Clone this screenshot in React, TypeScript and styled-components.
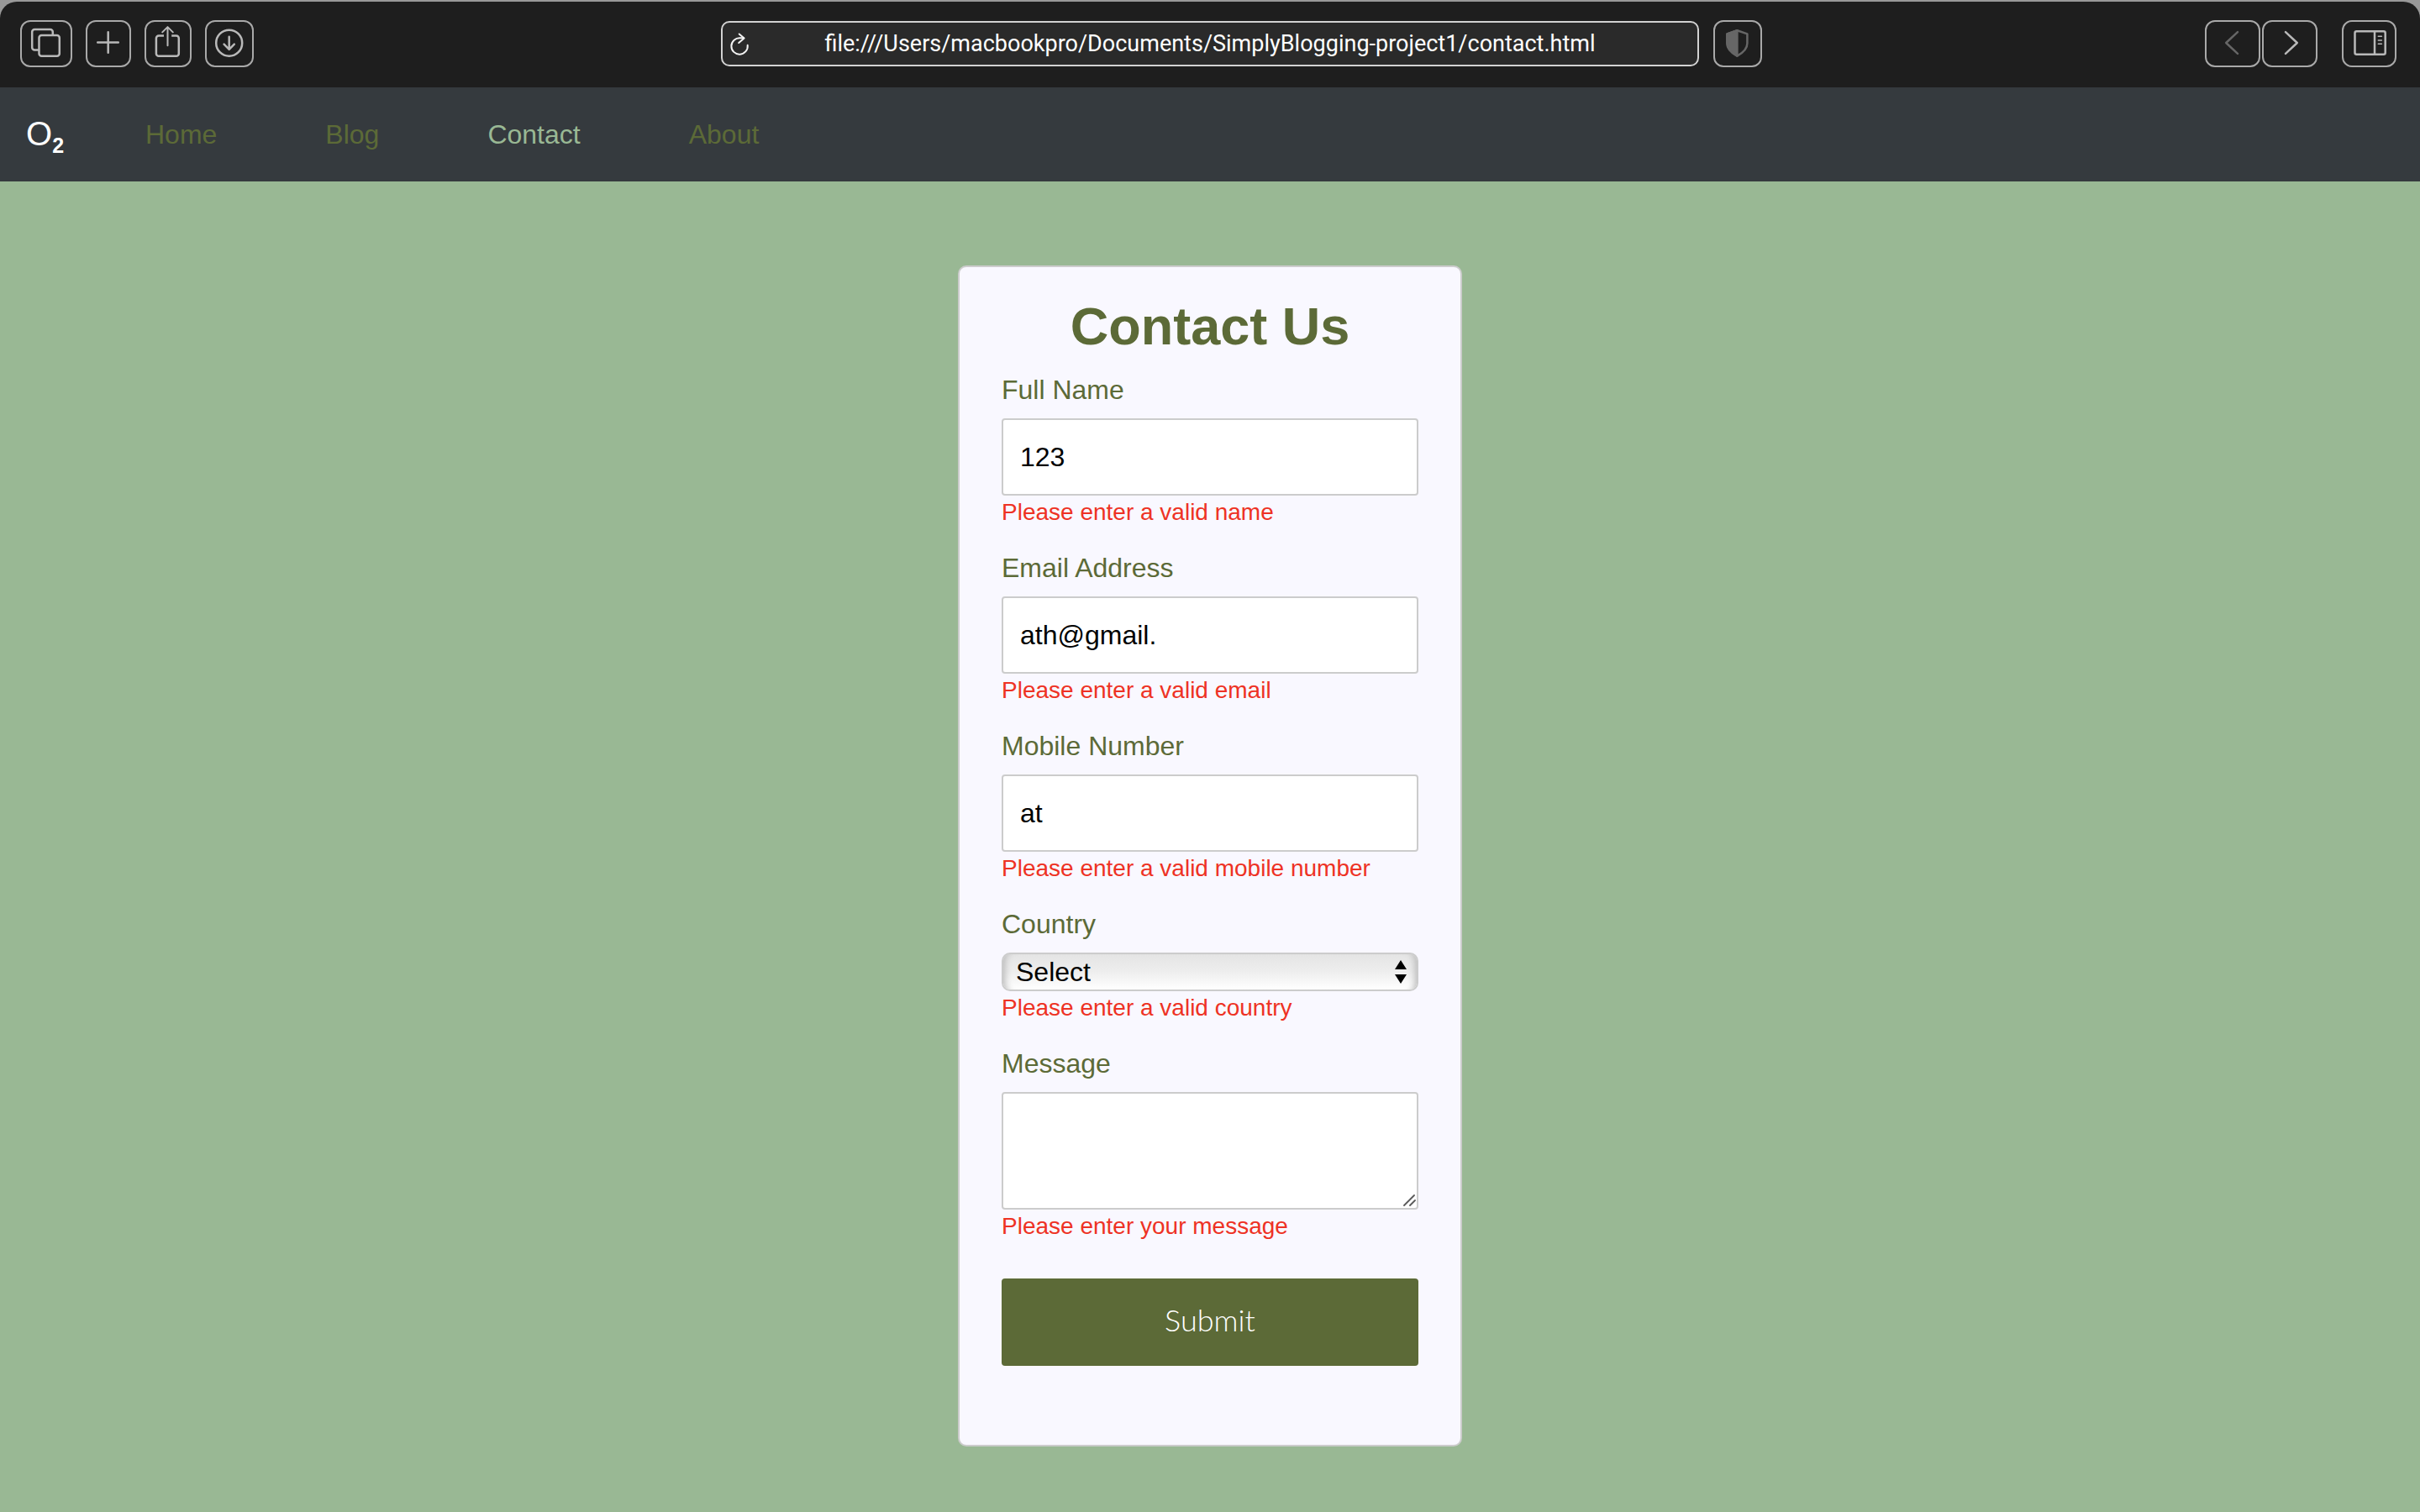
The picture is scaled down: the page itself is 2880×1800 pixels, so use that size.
import React from "react";
import styled, { createGlobalStyle } from "styled-components";

const colors = {
  olive: "#5c6a37",
  sage: "#99b894",
  slate: "#353a3e",
  chrome: "#1e1e1e",
  stroke: "#b9b9b9",
  muted: "#666666",
  line: "#cccccc",
  error: "#ee3224",
};

const GlobalStyle = createGlobalStyle`
  * { box-sizing: border-box; }
  body {
    margin: 0;
    background: ${colors.sage};
    font-family: "Liberation Sans", Arial, sans-serif;
  }
`;

const Window = styled.div`
  min-height: 100vh;
  background: ${colors.sage};
`;

const ToolbarFrame = styled.div`
  padding-top: 2px;
  background: #999999;
`;

const Toolbar = styled.div`
  display: grid;
  grid-template-columns: 1fr minmax(0, 1164px) 1fr;
  align-items: center;
  column-gap: 17px;
  height: 102px;
  padding: 0 24px 2px;
  border-radius: 20px 20px 0 0;
  background: ${colors.chrome};
`;

const Tools = styled.div<{ $gap: number }>`
  display: flex;
  align-items: center;
  gap: ${(p) => p.$gap}px;
`;

const RightTools = styled.div`
  display: flex;
  align-items: center;
  justify-content: space-between;
  padding-right: 4px;
`;

const IconButton = styled.button<{ $width: number }>`
  display: block;
  width: ${(p) => p.$width}px;
  height: 56px;
  padding: 0;
  border: 2px solid #a9a9a9;
  border-radius: 12px;
  background: transparent;
`;

const Icon = styled.svg<{ $muted?: boolean }>`
  display: block;
  width: 100%;
  height: 52px;
  fill: none;
  stroke: ${(p) => (p.$muted ? colors.muted : colors.stroke)};
  stroke-width: 2.5;
  stroke-linecap: round;
  stroke-linejoin: round;
`;

const AddressBar = styled.div`
  display: flex;
  align-items: center;
  height: 54px;
  padding: 0 40px 0 8px;
  border: 2px solid #d2d2d2;
  border-radius: 10px;
  background: #2a2a2a;
`;

const ReloadButton = styled.button`
  flex: none;
  width: 32px;
  padding: 0;
  border: 0;
  background: transparent;
`;

const ReloadIcon = styled.svg`
  display: block;
  width: 26px;
  height: 32px;
  fill: none;
  stroke: #f2f2f2;
  stroke-width: 2;
  stroke-linecap: round;
  stroke-linejoin: round;
`;

const AddressInput = styled.input`
  flex: 1;
  min-width: 0;
  padding: 0;
  border: 0;
  outline: 0;
  background: transparent;
  color: #ffffff;
  font: 27px/32px Roboto, sans-serif;
  text-align: center;
`;

const NavBar = styled.nav`
  display: flex;
  align-items: center;
  height: 112px;
  padding-left: 31px;
  background: ${colors.slate};
`;

const Brand = styled.a`
  width: 142px;
  color: #ffffff;
  font-size: 40px;
  line-height: 48px;
  text-decoration: none;
`;

const BrandSub = styled.sub`
  font-size: 25px;
  font-weight: 700;
  line-height: 1;
`;

const NavLinks = styled.div`
  display: flex;
  gap: 129px;
`;

const NavLink = styled.a<{ $active?: boolean }>`
  color: ${(p) => (p.$active ? colors.sage : colors.olive)};
  font-size: 32px;
  line-height: 36px;
  text-decoration: none;
`;

const Main = styled.main`
  display: flex;
  justify-content: center;
  padding: 100px 24px 78px;
`;

const Card = styled.form`
  width: 100%;
  max-width: 600px;
  padding: 34px 50px 94px;
  border: 2px solid ${colors.line};
  border-radius: 10px;
  background: #f9f8ff;
`;

const Title = styled.h1`
  margin: 0 0 22px;
  color: ${colors.olive};
  font-size: 63px;
  font-weight: 700;
  line-height: 72px;
  text-align: center;
`;

const Fields = styled.div`
  display: grid;
  row-gap: 32px;
`;

const FieldRow = styled.div`
  display: grid;
`;

const Label = styled.label`
  margin-bottom: 16px;
  color: ${colors.olive};
  font-size: 32px;
  line-height: 36px;
`;

const ErrorText = styled.span`
  margin-top: 4px;
  color: ${colors.error};
  font-size: 28px;
  line-height: 32px;
`;

const TextInput = styled.input`
  width: 100%;
  height: 92px;
  padding: 0 20px;
  border: 2px solid ${colors.line};
  border-radius: 4px;
  outline: 0;
  background: #ffffff;
  color: #000000;
  font: 32px/36px "Liberation Sans", Arial, sans-serif;
`;

/* Stacks a control and its ornament in one grid cell. */
const Stack = styled.div`
  display: grid;

  & > * {
    grid-area: 1 / 1;
  }
`;

const Select = styled.select`
  appearance: none;
  width: 100%;
  height: 46px;
  padding: 0 44px 0 15px;
  border: 2px solid ${colors.line};
  border-radius: 10px;
  outline: 0;
  background: linear-gradient(#e4e4e4, #eeeeee 50%, #ffffff);
  box-shadow: inset 10px 0 8px -8px #b8b8b8, inset -10px 0 8px -8px #b8b8b8;
  color: #000000;
  font: 32px/36px "Liberation Sans", Arial, sans-serif;
`;

const SelectArrows = styled.svg`
  align-self: center;
  justify-self: end;
  width: 14px;
  height: 28px;
  margin-right: 14px;
  pointer-events: none;
`;

const TextArea = styled.textarea`
  width: 100%;
  height: 140px;
  padding: 20px;
  border: 2px solid ${colors.line};
  border-radius: 4px;
  outline: 0;
  resize: none;
  background: #ffffff;
  font: 32px/36px "Liberation Sans", Arial, sans-serif;
`;

const Grip = styled.svg`
  align-self: end;
  justify-self: end;
  width: 16px;
  height: 16px;
  margin: 0 3px 3px 0;
  fill: none;
  stroke: #5a5a5a;
  stroke-width: 1.8;
  stroke-linecap: round;
  pointer-events: none;
`;

const SubmitButton = styled.button`
  display: block;
  width: 100%;
  height: 104px;
  margin-top: 46px;
  padding: 0 0 6px;
  border: 0;
  border-radius: 4px;
  background: ${colors.olive};
  color: #ffffff;
  font: 300 36px/44px Lato, sans-serif;
`;

type FieldProps = {
  id: string;
  label: string;
  error: string;
  children: React.ReactNode;
};

function Field({ id, label, error, children }: FieldProps) {
  return (
    <FieldRow>
      <Label htmlFor={id}>{label}</Label>
      {children}
      <ErrorText>{error}</ErrorText>
    </FieldRow>
  );
}

function BrowserToolbar() {
  return (
    <ToolbarFrame>
      <Toolbar>
        <Tools $gap={16}>
          <IconButton $width={62} type="button" aria-label="Show tabs">
            <Icon viewBox="0 0 58 52">
              <rect x="20.5" y="15.9" width="24.3" height="24.9" rx="3" />
              <path d="M36.8 15.5V11.9a3 3 0 0 0-3-3H15.2a3 3 0 0 0-3 3V30.5a3 3 0 0 0 3 3H20" />
            </Icon>
          </IconButton>
          <IconButton $width={54} type="button" aria-label="New tab">
            <Icon viewBox="0 0 50 52">
              <path d="M24.7 12.2V36.8M12.2 24.5H36.8" />
            </Icon>
          </IconButton>
          <IconButton $width={56} type="button" aria-label="Share">
            <Icon viewBox="0 0 52 52">
              <path strokeLinecap="butt" d="M21 16.5H14.9a3 3 0 0 0-3 3V37.8a3 3 0 0 0 3 3H35.8a3 3 0 0 0 3-3V19.5a3 3 0 0 0-3-3H30.2" />
              <path strokeWidth="2" d="M25.5 6.5V28.2M19.2 12.4L25.5 6.1L31.8 12.4" />
            </Icon>
          </IconButton>
          <IconButton $width={58} type="button" aria-label="Downloads">
            <Icon viewBox="0 0 54 52">
              <circle cx="26.7" cy="25.2" r="15.5" />
              <path d="M26.7 17.8V32.6M20.6 26.7L26.7 32.8L32.8 26.7" />
            </Icon>
          </IconButton>
        </Tools>

        <AddressBar>
          <ReloadButton type="button" aria-label="Reload">
            <ReloadIcon viewBox="0 0 26 32">
              <path d="M17 9.3H13A9.7 9.7 0 1 0 21.7 17.8" />
              <path d="M11.7 4.5L17.6 9.5L11.2 15" />
            </ReloadIcon>
          </ReloadButton>
          <AddressInput
            aria-label="Address"
            defaultValue="file:///Users/macbookpro/Documents/SimplyBlogging-project1/contact.html"
          />
        </AddressBar>

        <RightTools>
          <IconButton $width={58} type="button" aria-label="Privacy report">
            <Icon $muted viewBox="0 0 54 52">
              <path d="M26.4 10.2L38.4 14.4V25.5C38.4 32.5 33 37 26.4 40.6C19.8 37 14.4 32.5 14.4 25.5V14.4Z" />
              <path
                fill={colors.muted}
                d="M26.4 10.2V40.6C19.8 37 14.4 32.5 14.4 25.5V14.4Z"
              />
            </Icon>
          </IconButton>
          <Tools $gap={29}>
            <Tools $gap={2}>
              <IconButton $width={66} type="button" aria-label="Back">
                <Icon $muted viewBox="0 0 62 52">
                  <path d="M37 12.2L23.2 25L37 37.8" />
                </Icon>
              </IconButton>
              <IconButton $width={66} type="button" aria-label="Forward">
                <Icon viewBox="0 0 62 52">
                  <path d="M26 12.2L39.8 25L26 37.8" />
                </Icon>
              </IconButton>
            </Tools>
            <IconButton $width={65} type="button" aria-label="Show sidebar">
              <Icon viewBox="0 0 61 52">
                <rect x="13.5" y="11.2" width="36.2" height="27.6" rx="2" />
                <path d="M37 11.2V38.8" />
                <path strokeWidth="1.6" d="M41.3 17.3H45.4M41.3 22H45.4M41.3 26.3H45.4" />
              </Icon>
            </IconButton>
          </Tools>
        </RightTools>
      </Toolbar>
    </ToolbarFrame>
  );
}

const links = ["Home", "Blog", "Contact", "About"];

export default function App() {
  return (
    <Window>
      <GlobalStyle />
      <BrowserToolbar />
      <NavBar>
        <Brand href="#home">
          O<BrandSub>2</BrandSub>
        </Brand>
        <NavLinks>
          {links.map((name) => (
            <NavLink key={name} href={`#${name.toLowerCase()}`} $active={name === "Contact"}>
              {name}
            </NavLink>
          ))}
        </NavLinks>
      </NavBar>
      <Main>
        <Card onSubmit={(e) => e.preventDefault()} noValidate>
          <Title>Contact Us</Title>
          <Fields>
            <Field id="name" label="Full Name" error="Please enter a valid name">
              <TextInput id="name" type="text" defaultValue="123" />
            </Field>
            <Field id="email" label="Email Address" error="Please enter a valid email">
              <TextInput id="email" type="email" defaultValue="ath@gmail." />
            </Field>
            <Field id="mobile" label="Mobile Number" error="Please enter a valid mobile number">
              <TextInput id="mobile" type="tel" defaultValue="at" />
            </Field>
            <Field id="country" label="Country" error="Please enter a valid country">
              <Stack>
                <Select id="country" defaultValue="">
                  <option value="">Select</option>
                </Select>
                <SelectArrows viewBox="0 0 14 28" aria-hidden="true">
                  <path d="M7 0L14 11H0ZM7 28L14 17H0Z" />
                </SelectArrows>
              </Stack>
            </Field>
            <Field id="message" label="Message" error="Please enter your message">
              <Stack>
                <TextArea id="message" />
                <Grip viewBox="0 0 16 16" aria-hidden="true">
                  <path d="M2 14L14 2M9 14L15 8" />
                </Grip>
              </Stack>
            </Field>
          </Fields>
          <SubmitButton type="submit">Submit</SubmitButton>
        </Card>
      </Main>
    </Window>
  );
}
